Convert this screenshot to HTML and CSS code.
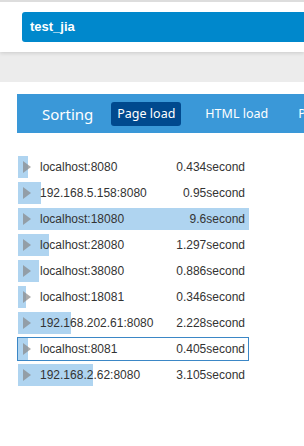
FILE: index.html
```html
<!DOCTYPE html>
<html lang="en">
<head>
    <meta charset="UTF-8">
    <title>Load times</title>
    <link rel="stylesheet" href="styles.css">
</head>
<body>
    <div class="topbar">
        <div class="project">test_jia</div>
    </div>
    <div class="band"></div>

    <div class="main">
        <div class="tabs">
            <span class="tabs-label">Sorting</span>
            <span class="tab active">Page load</span>
            <span class="tab">HTML load</span>
            <span class="tab">Page size</span>
        </div>

        <div class="list">
            <div class="row"><span class="bar" style="width: 10px"></span><span class="arrow"></span><span class="host">localhost:8080</span><span class="time">0.434second</span></div>
            <div class="row"><span class="bar" style="width: 23px"></span><span class="arrow"></span><span class="host">192.168.5.158:8080</span><span class="time">0.95second</span></div>
            <div class="row"><span class="bar" style="width: 231px"></span><span class="arrow"></span><span class="host">localhost:18080</span><span class="time">9.6second</span></div>
            <div class="row"><span class="bar" style="width: 31px"></span><span class="arrow"></span><span class="host">localhost:28080</span><span class="time">1.297second</span></div>
            <div class="row"><span class="bar" style="width: 21px"></span><span class="arrow"></span><span class="host">localhost:38080</span><span class="time">0.886second</span></div>
            <div class="row"><span class="bar" style="width: 8px"></span><span class="arrow"></span><span class="host">localhost:18081</span><span class="time">0.346second</span></div>
            <div class="row"><span class="bar" style="width: 53px"></span><span class="arrow"></span><span class="host">192.168.202.61:8080</span><span class="time">2.228second</span></div>
            <div class="row selected"><span class="bar" style="width: 10px"></span><span class="arrow"></span><span class="host">localhost:8081</span><span class="time">0.405second</span></div>
            <div class="row"><span class="bar" style="width: 75px"></span><span class="arrow"></span><span class="host">192.168.2.62:8080</span><span class="time">3.105second</span></div>
        </div>
    </div>
</body>
</html>
```

FILE: styles.css
```css
* {
    margin: 0;
    padding: 0;
    box-sizing: border-box;
}

body {
    background: #fff;
    color: #333;
    font-family: "Liberation Sans", Arial, sans-serif;
    overflow: hidden;
}

/* Header */
.topbar {
    position: relative;
    height: 52px;
    border-top: 2px solid #ddd;
    padding: 10px 0 0 22px;
    background: #fff;
    box-shadow: 0 1px 4px rgba(0,0,0,0.15);
}

.project {
    height: 30px;
    margin-right: -20px;
    padding-left: 8px;
    border-radius: 3px 0 0 3px;
    background: #0088cc;
    color: #fff;
    font-size: 13px;
    font-weight: bold;
    line-height: 30px;
}

.band {
    height: 30px;
    background: #ececec;
}

/* Content */
.main {
    padding: 12px 0 0 17px;
}

.tabs {
    display: flex;
    align-items: center;
    gap: 18px;
    height: 39px;
    margin-right: -200px;
    padding-left: 25px;
    background: #3a98d8;
    color: #fff;
    font-family: "Noto Sans", "Open Sans", sans-serif;
    white-space: nowrap;
}

.tabs-label {
    font-size: 15px;
}

.tab {
    height: 24px;
    padding: 0 6px;
    border-radius: 3px;
    font-size: 12.5px;
    line-height: 24px;
}

.tab.active {
    background: #00498e;
}

.list {
    width: 232px;
    margin-top: 22px;
}

.row {
    position: relative;
    display: flex;
    align-items: center;
    height: 24px;
    margin-bottom: 2px;
    border: 1px solid transparent;
    font-size: 12px;
}

.row.selected {
    border-color: #3b87c6;
}

.bar {
    position: absolute;
    top: 0;
    bottom: 0;
    left: 0;
    background: #afd4f0;
}

.arrow {
    position: relative;
    width: 0;
    height: 0;
    margin-left: 5px;
    border-top: 6px solid transparent;
    border-bottom: 6px solid transparent;
    border-left: 8px solid #888;
    opacity: 0.7;
}

.host {
    position: relative;
    margin-left: 9px;
}

.time {
    position: relative;
    margin-left: auto;
    padding-right: 3px;
}
```
